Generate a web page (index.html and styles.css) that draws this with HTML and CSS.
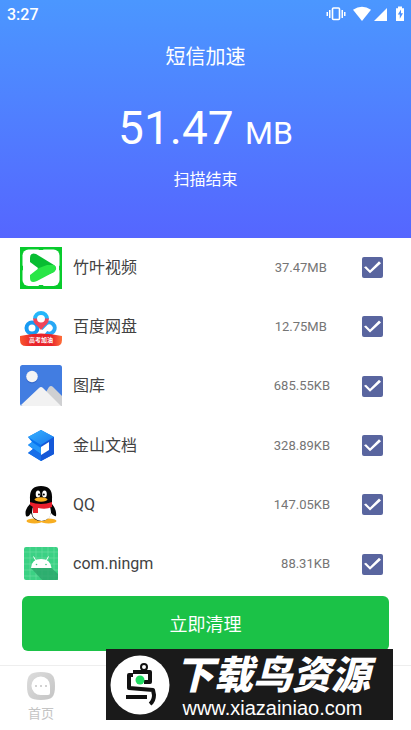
FILE: index.html
```html
<!DOCTYPE html>
<html lang="zh-CN">
<head>
<meta charset="UTF-8">
<title>短信加速</title>
<meta name="viewport" content="width=device-width, initial-scale=1.0">
<link rel="stylesheet" href="styles.css">
</head>
<body>

<header class="header">
  <div class="status-bar">
    <span class="time">3:27</span>
    <svg class="status-icons" width="78" height="18" viewBox="0 0 78 18" fill="#fff">
      <rect x="6.5" y="3" width="7" height="11.5" rx="1" fill="none" stroke="#fff" stroke-width="1.6"/>
      <path d="M3 5h1.5v8H3zM.5 7H2v4H.5zM15.5 5H17v8h-1.5zM18 7h1.5v4H18z"/>
      <path d="M27 4.8Q36-1.4 45 4.8L36 16Z"/>
      <path d="M61 3v13H48Z"/>
      <path d="M70 3.2h2V1.5h4v1.7h2V16H70V3.2Z"/>
      <path d="M75 4.5l-3.2 5h2v4.2l3.2-5.5h-2Z" fill="#4b91ff"/>
    </svg>
  </div>
  <h1 class="title">短信加速</h1>
  <p class="total">51.47 <span class="unit">MB</span></p>
  <p class="scan-state">扫描结束</p>
</header>

<main class="main">
  <ul class="app-list">
    <li class="app">
      <svg class="app-icon" viewBox="0 0 42 42">
        <path fill="#08cb2c" d="M0 0h42v42H0z"/>
        <rect x="2.5" y="2.5" width="37" height="36.5" rx="6" fill="#fff"/>
        <path fill="#08cb2c" d="M18 1h6l-1 2h-4zM18 40h6l-1-2h-4zM1 18v6l2-1v-4zM41 18v6l-2-1v-4z"/>
        <path d="M10 11Q10 5 16 7L34 18Q38 21 34 25L27 28 10 16Z" fill="#08bd32"/>
        <path d="M10 28L19 21 27 18H34Q38 21 34 25L17 34Q10 37 10 31Z" fill="#28e646"/>
        <path d="M10 15L18 21 10 26Z" fill="#fff"/>
      </svg>
      <label class="app-name" for="app1">竹叶视频</label>
      <span class="app-size">37.47MB&nbsp;</span>
      <input class="check" type="checkbox" id="app1" checked>
    </li>
    <li class="app">
      <svg class="app-icon" viewBox="0 0 42 42">
        <defs>
          <linearGradient id="ribbon" x2="1">
            <stop stop-color="#f9572e"/>
            <stop offset=".3" stop-color="#e8242b"/>
            <stop offset=".75" stop-color="#e8242b"/>
            <stop offset="1" stop-color="#ff713b"/>
          </linearGradient>
        </defs>
        <g fill="none" stroke-width="4">
          <circle cx="12" cy="22" r="5.5" stroke="#189af2"/>
          <path d="M26 26.5A5.5 5.5 0 1 0 25.5 18L21 22.500" stroke="#28a8f5"/>
          <path d="M15 13A6 6 0 0 1 27 13" stroke="#25b7fa"/>
          <path d="M15 12.500A6 6 0 0 0 27 12.500" stroke="#ef455b"/>
        </g>
        <path d="M15 17.500Q21 21 27 17.500L21 24Z" fill="#ef455b"/>
        <path d="M0 30Q21 25 42 30V34Q42 40 36 40H6Q0 40 0 34Z" fill="url(#ribbon)"/>
        <text class="ribbon-text" x="21" y="36" text-anchor="middle">高考加油</text>
      </svg>
      <label class="app-name" for="app2">百度网盘</label>
      <span class="app-size">12.75MB&nbsp;</span>
      <input class="check" type="checkbox" id="app2" checked>
    </li>
    <li class="app">
      <svg class="app-icon" viewBox="0 0 42 42">
        <rect width="42" height="41" rx="2.5" fill="#427de1"/>
        <circle cx="12" cy="12.5" r="6" fill="#376acb"/>
        <circle cx="12" cy="11.5" r="5.8" fill="#f5f5f5"/>
        <path d="M26 27L29 22Q31 20 33 22L42 31V41H34Z" fill="#cfd0d2"/>
        <path d="M1 40L19 23Q21 21 23 23L41 41H3Q1 41 1 40Z" fill="#f2f2f2"/>
      </svg>
      <label class="app-name" for="app3">图库</label>
      <span class="app-size">685.55KB</span>
      <input class="check" type="checkbox" id="app3" checked>
    </li>
    <li class="app">
      <svg class="app-icon" viewBox="0 0 42 42">
        <defs>
          <linearGradient id="cube" x2="1" y2="1">
            <stop stop-color="#36b3ff"/>
            <stop offset="1" stop-color="#1877ee"/>
          </linearGradient>
        </defs>
        <path d="M21 5L34 12V29L21 36 8 28 13 24 8 20 12 17 8 12Z" fill="#0874ef"/>
        <path d="M21 5L34 12 21 20 8 12Z" fill="url(#cube)"/>
        <path d="M8 20l4-3 9 6v6Z" fill="#2597fa"/>
        <path d="M8 28l5-4 8 5v7Z" fill="#176fe9"/>
        <path d="M21 20L34 12V29L21 36Z" fill="#1558d8"/>
        <path d="M21 22l8-5v8l-8 5Z" fill="#fff"/>
      </svg>
      <label class="app-name" for="app4">金山文档</label>
      <span class="app-size">328.89KB</span>
      <input class="check" type="checkbox" id="app4" checked>
    </li>
    <li class="app">
      <svg class="app-icon" viewBox="0 0 42 42">
        <ellipse cx="14.5" cy="37" rx="8" ry="2.5" fill="#f7ae22"/>
        <ellipse cx="28.5" cy="37" rx="8" ry="2.5" fill="#f7ae22"/>
        <path d="M10 15Q9 2 21 2T32 15V20Q37 26 36 32 34 33 31 29 29 37 21 37T11 29Q8 34 6 32 4 26 10 20Z" fill="#050505"/>
        <path d="M13 23h17Q34 36 21.5 37 9 36 13 23Z" fill="#fff"/>
        <path d="M10 18Q21 22 32 18V23Q26 26 18 24V29H13V23L10 21Z" fill="#e91f2c"/>
        <ellipse cx="18" cy="10" rx="2.3" ry="3.5" fill="#fff"/>
        <ellipse cx="24.5" cy="10" rx="2.3" ry="3.5" fill="#fff"/>
        <circle cx="19" cy="10.5" r="1"/>
        <circle cx="23.8" cy="10.5" r="1"/>
        <ellipse cx="21" cy="15.5" rx="6.5" ry="2.2" fill="#f7ad1f"/>
      </svg>
      <label class="app-name" for="app5">QQ</label>
      <span class="app-size">147.05KB</span>
      <input class="check" type="checkbox" id="app5" checked>
    </li>
    <li class="app">
      <svg class="app-icon" viewBox="0 0 42 42">
        <rect x="4" y="4" width="34" height="33" rx="2" fill="#3bd184"/>
        <path d="M10 4v33M16 4v33M22 4v33M28 4v33M34 4v33M4 9h34M4 15h34M4 21h34M4 27h34M4 33h34" stroke="#79e1ab" stroke-width=".5"/>
        <path d="M11 25h20.5L38 31V37H22Z" fill="#2ba56a" opacity=".8"/>
        <path d="M11 25Q11.5 16 21 16T31.5 25Z" fill="#fff"/>
        <path d="M16 18l-2.5-4.500M26 18l2.500-4.500" stroke="#fff"/>
        <circle cx="16.5" cy="21.5" r=".8" fill="#3bd184"/>
        <circle cx="26" cy="21.5" r=".8" fill="#3bd184"/>
      </svg>
      <label class="app-name" for="app6">com.ningm</label>
      <span class="app-size">88.31KB</span>
      <input class="check" type="checkbox" id="app6" checked>
    </li>
  </ul>
  <button class="clean-button" type="button">立即清理</button>
</main>

<nav class="tab-bar">
  <a class="tab" href="#">
    <svg width="28" height="28" viewBox="0 0 28 28">
      <defs>
        <linearGradient id="tab" x2="1" y2="1">
          <stop stop-color="#ddd"/>
          <stop offset="1" stop-color="#c4c4c4"/>
        </linearGradient>
      </defs>
      <path d="M14 0C25 0 28 3 28 14S25 28 14 28 0 25 0 14 3 0 14 0Z" fill="url(#tab)"/>
      <path d="M23 14V21Q23 23 21 23H14A9.3 9.3 0 1 1 23 14Z" fill="#fff"/>
      <path d="M8 13h2v2H8zM13 13h2v2h-2zM18 13h2v2h-2z" fill="#d2d2d2"/>
    </svg>
    <span>首页</span>
  </a>
</nav>

<aside class="banner">
  <svg class="banner-logo" width="60" height="60" viewBox="0 0 60 60">
    <circle cx="30" cy="30" r="29.5" fill="#fff"/>
    <g fill="none" stroke="#111" stroke-width="4" stroke-linejoin="round">
      <circle cx="34" cy="12" r="3" stroke-width="2"/>
      <path d="M23 17H40V27H34M23 20H19V33L43 35 44 40Q44 46 40 49M16 42H37"/>
    </g>
    <circle cx="30" cy="25" r="4.5" fill="#20dc62"/>
  </svg>
  <div class="banner-words">
    <strong class="banner-name">下载鸟资源</strong>
    <span class="banner-url">www.xiazainiao.com</span>
  </div>
</aside>

</body>
</html>
```
FILE: styles.css
```css
* {
  box-sizing: border-box;
}
body {
  margin: 0;
  min-height: 100vh;
  display: flex;
  flex-direction: column;
  font-family: Roboto, "Noto Sans CJK SC", sans-serif;
  background-color: white;
  color: #424242;
}
.header {
  padding-bottom: 46px;
  background: linear-gradient(#4b97ff, #5566ff);
  color: white;
  text-align: center;
}
.status-bar {
  display: flex;
  justify-content: space-between;
  align-items: center;
  height: 28px;
  padding: 0 7px;
}
.time {
  font-size: 16px;
  font-weight: 500;
}
.title {
  margin: 12px 0 0;
  font-size: 20px;
  font-weight: 400;
  line-height: 34px;
}
.total {
  margin: 25px 0 0;
  font-size: 46px;
  line-height: 58px;
}
.unit {
  font-size: 32px;
  line-height: 32px;
}
.scan-state {
  margin: 11px 0 0;
  font-size: 16px;
  line-height: 24px;
}
.main {
  flex: 1;
  display: flex;
  flex-direction: column;
}
.app-list {
  flex: 1;
  display: flex;
  flex-direction: column;
  margin: 0;
  padding: 0;
  list-style: none;
}
.app {
  flex: 1;
  display: flex;
  align-items: center;
  padding: 0 28px 0 20px;
}
.app-icon {
  width: 42px;
  height: 42px;
}
.ribbon-text {
  font-size: 6px;
  font-weight: 700;
  fill: white;
}
.app-name {
  flex: 1;
  margin-left: 11px;
  font-size: 16px;
  line-height: 24px;
}
.app-size {
  font-size: 13px;
  line-height: 16px;
  color: #757575;
}
.check {
  appearance: none;
  width: 21px;
  height: 21px;
  margin: 0 0 0 32px;
  border-radius: 2px;
  background-color: #59659f;
}
/* Tick */
.check:checked::after {
  content: "";
  display: block;
  width: 21px;
  height: 21px;
  background-color: white;
  clip-path: polygon(2px 10px, 4px 9px, 8px 13px, 17px 4px, 19px 6px, 8px 16px);
}
.clean-button {
  height: 55px;
  margin: 2px 22px 14px;
  padding: 0 0 2px;
  border: 0;
  border-radius: 6px;
  background-color: #1bc247;
  color: white;
  font-family: inherit;
  font-size: 18px;
}
.tab-bar {
  display: flex;
  height: 65px;
  border-top: 1px solid #eee;
}
.tab {
  display: flex;
  flex-direction: column;
  align-items: center;
  width: 20%;
  padding-top: 6px;
  color: #c4c4c4;
  font-size: 13px;
  line-height: 28px;
  text-decoration: none;
}
/* Sits over the tab bar */
.banner {
  position: fixed;
  right: 18px;
  bottom: 10px;
  display: flex;
  align-items: center;
  width: 287px;
  height: 71px;
  padding-left: 4px;
  background-color: #1a1a1a;
  color: white;
}
.banner-words {
  flex: 1;
  display: flex;
  flex-direction: column;
  align-items: center;
  padding: 6px 18px 0 0;
}
.banner-name {
  font-size: 39px;
  font-style: italic;
  font-weight: 900;
  line-height: 40px;
  white-space: nowrap;
}
.banner-url {
  font-family: "Liberation Sans", Arial, sans-serif;
  font-size: 20px;
  line-height: 24px;
}
```
